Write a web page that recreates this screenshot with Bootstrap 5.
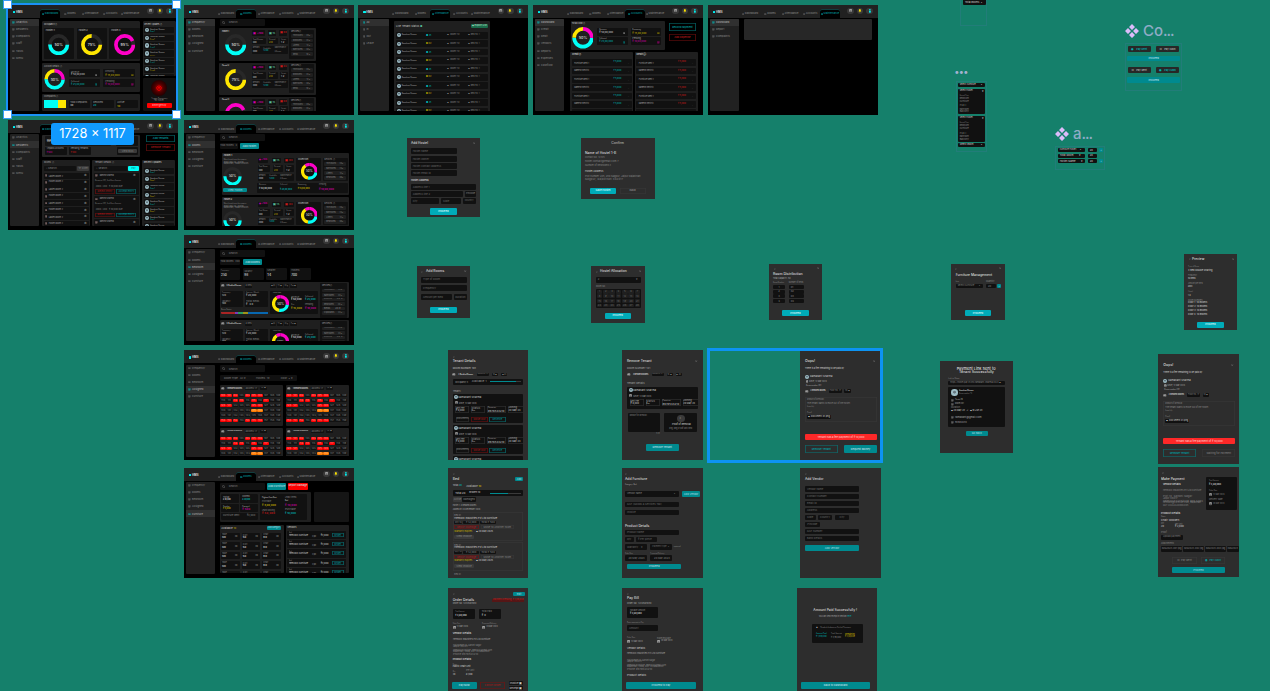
<!DOCTYPE html>
<html lang="en">
<head>
<meta charset="utf-8">
<title>Hostel dashboard – design board</title>
<link href="https://cdn.jsdelivr.net/npm/bootstrap@5.3.0/dist/css/bootstrap.min.css" rel="stylesheet">
<script src="https://cdn.jsdelivr.net/npm/bootstrap@5.3.0/dist/js/bootstrap.bundle.min.js"></script>
<style>
body{margin:0;background:#15806b;font-family:Inter,"Liberation Sans",sans-serif;overflow:hidden}
#board{position:relative;width:1270px;height:691px;overflow:hidden;font-size:2.6px;line-height:1;color:#848484}
.artboard{position:absolute;overflow:hidden;background:#000}
.sheet{position:absolute;overflow:hidden;background:#2d2d2d}
.plain{background:none;border:1px solid rgba(60,120,150,.35)}
.cell{flex:none;display:flex;align-items:center;white-space:nowrap;min-width:0}
.bx{background:#111;border-radius:1px;padding:0 2px;overflow:hidden}
.mid{justify-content:center;padding:0}
.panel{display:block;overflow:hidden;border-radius:1px;background:#111}
.g1{background:#1f1f1f}.g2{background:#272727}.g3{background:#151515}.g4{background:#3a3a3a}
.bare{background:none}
.teal{background:#008a8f;color:#b5dfe2}.aqua{background:#00abb8;color:#dffafc}.cyan{background:#00fff7;color:#077}
.yel{background:#ffe600}.redb{background:#fe2828;color:#ffbdbd}.pure{background:#f00;color:#ff9c9c}.org{background:#ff7a00;color:#ffc08a}
.grn{background:#1b6b4b;color:#bfe0d0}
.s1{background:#a92424}.s2{background:#7a3bbb}.s3{background:#2a9c62}.s4{background:#a09318}.s5{background:#0867b0}
.oc{background:none;box-shadow:inset 0 0 0 .6px #067a7d;color:#00a0a4}
.or{background:none;box-shadow:inset 0 0 0 .6px #7c1010;color:#b01818}
.og{background:none;box-shadow:inset 0 0 0 .5px #3b3b3b;color:#888}
.w{color:#d6d6d6}.lg{color:#a8a8a8}.dk{color:#6a6a6a}.tc{color:#00b8b8}.ty{color:#c9b700}.tr{color:#cc1a1a}.tm{color:#d200a8}.tg{color:#5b9}
.b{font-weight:600}
.h{font-size:4.1px;font-weight:500;color:#dcdcdc}.h2x{font-size:3.3px;color:#c8c8c8}
.ava{border-radius:50%;background:radial-gradient(circle at 50% 45%,#667780 0 20%,#9dbdc6 34% 100%)}
.disc{border-radius:50%;background:#3a3a3a;color:#888}
.glow{border-radius:50%;background:radial-gradient(circle,#8e0000 0 18%,#4d0000 40%,#250000 70%)}
.topbar{height:13px;background:#212121}
.logo{margin:5px 0 0 4.8px;width:27.2px;color:#ddd;font-size:2.8px;font-weight:700;display:flex;align-items:center;gap:.6px;height:5px}
.logo i{width:2.6px;height:2.3px;background:#00f5f5;border-radius:.5px}
.tabs5{display:grid;grid-template-columns:repeat(5,20px);padding-top:5.5px}
.tabs5 div{display:flex;align-items:center;justify-content:center;gap:.7px;font-size:2.6px;color:#8c8c8c;white-space:nowrap}
.tabs5 .on{background:#000;border-radius:2px 2px 0 0;color:#00a8ac;box-shadow:0 -.4px 0 #065a5c}
.tabs5 svg{width:2.3px;height:2.3px}
.tools{margin:3px 0 0 7.5px;display:flex;gap:3px}
.tools span{width:6.4px;height:6.4px;border-radius:50%;background:#383838;display:grid;place-items:center}
.tools svg,.sidebar svg{display:block}
.sidebar{width:29px;height:92.2px;margin:1.5px 0 0 1.5px;background:#212121;border-radius:1px;overflow:hidden;flex:none}
.sidebar div{height:7.08px;display:flex;align-items:center;padding-left:2.8px;gap:1.2px;color:#8a8a8a;font-size:2.6px}
.sidebar .on{background:#303030;color:#bbb}
.stage{width:138px;height:93px;overflow:hidden;flex:none}
.picked{position:absolute;border:2px solid #1a91f7}
.picked.bold{border-width:3px;border-color:#0d93f2}
.grip{position:absolute;width:9px;height:9px;background:#fff;border:1px solid #3a9df5}
.sizetag{position:absolute;left:51px;top:123px;width:83px;height:22px;border-radius:3px;background:#119aff;color:#fff;font-size:12.8px;display:flex;align-items:center;justify-content:center;white-space:nowrap}
.note{position:absolute;display:flex;align-items:center;gap:4px;color:#8facc6;font-size:15px;line-height:16px;white-space:nowrap;font-weight:500}
.note b{font-weight:500;letter-spacing:-1.1px}
.note b.dots{font-weight:800;color:#a3b2d0;font-size:16px}
</style>
</head>
<body>
<main id="board"></main>
<script>
const board = document.getElementById('board');
let K = 3; // design units per screen pixel
const px = v => (v / K).toFixed(2) + 'px';
const wrap = s => s === '' || s[0] === '<' ? s : '<span>' + s + '</span>';

// A vertical flow of rows: [top, height, ...cells], cell = [left, width, class, content]
function stack(x0, y0, rows) {
  let y = y0, out = '';
  for (const [top, h, ...cells] of rows) {
    let x = x0;
    out += `<div class="d-flex" style="margin-top:${px(top - y)};height:${px(h)}">`;
    for (const [cx, w, cls, body = ''] of cells) {
      out += `<div class="cell ${cls}" style="margin-left:${px(cx - x)};width:${px(w)}">${wrap(body)}</div>`;
      x = cx + w;
    }
    out += '</div>';
    y = top + h;
  }
  return out;
}
const L = (y, ...c) => [y - 5, 10, ...c.map(([x, w, s, k = '']) => [x, w, 't ' + k, s])];
const B = (y, h, ...c) => [y, h, ...c.map(([x, w, s = '', k = '']) => [x, w, 'bx ' + k, s])];
const P = (x, y, w, cls, rows) => [x, w, 'panel ' + cls, stack(x, y, rows)];

function donut(segs, label, sw = 17) {
  const arcs = segs.map(([c, from, len]) => `<circle r="41" fill="none" stroke="${c}" stroke-width="${sw}" pathLength="100" stroke-dasharray="${len} ${100 - len}" stroke-dashoffset="${-from}"/>`).join('');
  return `<svg viewBox="-50 -50 100 100" width="100%" height="100%"><g transform="rotate(-90)"><circle r="41" fill="none" stroke="#282828" stroke-width="${sw}"/>${arcs}</g><text y="6" text-anchor="middle" font-size="17" font-weight="600" fill="#c8c8c8">${label}</text></svg>`;
}
const CY = '#00fff7', YE = '#ffe600', MA = '#ff00c8';
const half = donut([[CY, 25, 50]], '50%'), three = donut([[YE, 25, 75]], '75%'), most = donut([[MA, 25, 93]], '95%');
const mix = donut([[CY, 25, 50], [YE, 75, 25], [MA, 0, 25]], '50%');
const mix2 = donut([[MA, 90, 10], [MA, 0, 28], [CY, 28, 25], [YE, 53, 37]], '50%', 19);

const ico = {
  cal: c => `<svg viewBox="0 0 16 16" width="3.2" height="3.2" fill="none" stroke="${c}" stroke-width="2"><rect x="2" y="3" width="12" height="11" rx="1"/><path d="M2 5h12" stroke-width="4"/></svg>`,
  bell: '<svg viewBox="0 0 16 16" width="3.8" height="3.8" fill="#ffe600"><path d="M8 0c4 1 4 5 4 8l2 3H2l2-3c0-3 0-7 4-8zM6 12h4l-2 3z"/></svg>',
  user: '<svg viewBox="0 0 16 16" width="3.8" height="3.8" fill="#00f0f0"><circle cx="8" cy="4" r="3.5"/><path d="M4 8h8l-1 8H5z"/></svg>',
  bed: '<svg viewBox="0 0 16 16" width="3.6" height="3.2" fill="#ccc"><path d="M1 3h14v10h-2v-2H3v2H1zm2 2v2h4V5zm6 0v2h4V5z" fill-rule="evenodd"/></svg>',
  box: c => `<svg viewBox="0 0 16 16" width="2.6" height="2.6" fill="none" stroke="${c}" stroke-width="2.5"><rect x="2" y="2" width="12" height="12" rx="1"/><path d="M5 9h6M8 5v6"/></svg>`,
  find: '<svg viewBox="0 0 16 16" width="3.2" height="3.2" fill="none" stroke="#888" stroke-width="2"><circle cx="7" cy="7" r="5"/><path d="M11 11l4 4"/></svg>',
  x: '<svg viewBox="0 0 16 16" width="2.4" height="2.4" fill="none" stroke="#999" stroke-width="2"><path d="M2 2l12 12M14 2L2 14"/></svg>',
  back: '<svg viewBox="0 0 16 16" width="2.2" height="2.2" fill="none" stroke="#aaa" stroke-width="2.5"><path d="M11 2L4 8l7 6"/></svg>'
};
const put = h => board.insertAdjacentHTML('beforeend', h);
const tabNames = ['Dashboard', 'Rooms', 'Attendance', 'Accounts', 'Maintenance'];

function artboard(x, y, ox, oy, tab, side, on, rows) {
  const tabs = tabNames.map((n, i) => `<div class="${i === tab ? 'on' : ''}">${ico.box(i === tab ? '#0cc' : '#777')}${n}</div>`).join('');
  const items = side.map((n, i) => `<div class="${i === on ? 'on' : ''}">${ico.box(i === on ? '#0cc' : '#777')}${n}</div>`).join('');
  put(`<section class="artboard" style="left:${x}px;top:${y}px;width:170px;height:110px">
    <div class="topbar d-flex"><div class="logo"><i></i>HMS</div><div class="tabs5">${tabs}</div>
    <div class="tools"><span>${ico.cal('#ddd')}</span><span>${ico.bell}</span><span>${ico.user}</span></div></div>
    <div class="d-flex"><div class="sidebar">${items}</div><div class="stage">${stack(ox + 30.5 * K, oy + 13 * K, rows)}</div></div></section>`);
}
function sheet(x, y, w, h, ox, oy, rows, cls = '') {
  put(`<section class="sheet ${cls}" style="left:${x}px;top:${y}px;width:${w}px;height:${h}px">${stack(ox, oy, rows)}</section>`);
}
const range = n => [...Array(n).keys()];
const roomSide = ['Frequency', 'Rooms', 'Bedroom', 'Assigned', 'Furniture'];

/* ---------- Analytics ---------- */
artboard(8, 4.5, 24, 13, 0, ['Analytics', 'Residents', 'Complaints', 'Staff', 'Tasks', 'Menu'], 0, [
  [63, 269,
    [126, 294, 'panel bare', stack(126, 63, [
      [63, 120, P(126, 63, 294, 'g1', [L(72, [132, 42, 'Occupancy ⓘ', 'w']),
        [85, 92, ...[['Hostel 1', half, 131], ['Hostel 2', three, 230], ['Hostel 3', most, 328]].map(([n, d, x]) =>
          P(x, 85, 92, '', [L(94, [x + 6, 28, n, 'lg b']), [101, 64, [x + 14, 64, '', d]]]))]])],
      [189, 87, P(126, 189, 294, 'g1', [L(198, [132, 55, 'Account Details ⓘ', 'lg']),
        [207, 62, [131, 64, '', mix], [207, 200, 'panel bare', stack(207, 207, [
          ...[[207, 'Revenue', '₹ 50,00,000', 'w', '#aaa', 'Remaining', '₹ 15,00,000', 'ty', '#a90'], [237, 'Collected', '₹ 25,00,000', 'tc', '#099', 'Pending', '₹ 10,00,000', 'tm', '#b08']].map(r =>
            [r[0], 25, P(207, r[0], 93, '', [L(r[0] + 8, [213, 25, r[1]]), L(r[0] + 17, [213, 42, r[2], r[3]], [284, 8, ico.box(r[4])])]),
              P(310, r[0], 94, '', [L(r[0] + 8, [316, 28, r[5]]), L(r[0] + 17, [316, 43, r[6], r[7]], [393, 8, ico.box(r[8])])])])])]]])],
      [282, 50, P(126, 282, 294, 'g1', [L(291, [132, 46, 'Complaints ⓘ', 'lg']),
        [300, 25, [132, 42, 'cyan'], [174, 24, 'yel'],
          ...[[207, 64, 'Total Complaints', '30', 'w'], [276, 67, 'Resolved', '20', 'tc'], [348, 65, 'Active', '10', 'ty']].map(([x, w, a, b, c]) =>
            P(x, 300, w, '', [L(308, [x + 4, Math.min(52, a.length * 3.7), a, 'lg']), L(317, [x + 4, 9, b, c + ' b'])]))]])]])],
    [428, 99, 'panel bare', stack(428, 63, [
      [63, 165, P(428, 63, 99, 'g1', [L(72, [433, 55, 'Recent Updates ⓘ', 'w']),
        ...range(7).map(i => [80 + i * 23.5, 20, P(432, 80 + i * 23.5, 91, '', [[83 + i * 23.5, 13, [435, 13, 'ava'],
          [450, 60, 'panel bare', stack(450, 83 + i * 23.5, [L(88 + i * 23.5, [450, 45, 'Ramakant Sharma', 'lg']), L(95 + i * 23.5, [450, 15, 'Room ' + (i + 1), i % 2 ? 'ty' : 'tc'])])]]])])])],
      [235, 97, P(428, 235, 99, '', [[239, 48, [454, 48, 'glow mid', '<svg viewBox="0 0 16 16" width="6" height="6" fill="none" stroke="#f00" stroke-width="2"><path d="M5 3a6 6 0 1 0 6 0M8 1v7M6 5v5M10 5v5"/></svg>']],
        L(295, [454, 50, 'Trigger Emergency']), L(301, [464, 28, 'for hostel']), B(309, 14, [441, 74, 'Emergency', 'pure mid b'])])]])]]
]);

/* ---------- Frequency ---------- */
const freq = (y, name, d) => [y, 97, P(658, y, 290, 'g1', [[y + 4, 88,
  [664, 85, 'panel bare', stack(664, y + 4, [L(y + 9, [666, 22, name, 'w b']), [y + 18, 64, [674, 64, '', d]]])],
  [755, 110, 'panel bare', stack(755, y + 4, [
    B(y + 6, 17, [755, 40, '▣ +100', 'mid tm b'], [804, 24, '▣ 15', 'mid tg b'], [838, 24, '▣ 03', 'mid tr b']),
    [y + 28, 20, ...[[755, 42, 'Total Rooms', '400', 'w'], [804, 30, 'Occupied', '20', 'ty'], [840, 25, 'Vacant', '12', 'w']].map(([x, w, a, b, c]) => P(x, y + 28, w, '', [L(y + 34, [x + 3, w - 10, a]), L(y + 42, [x + 3, 12, b, c])]))],
    [y + 53, 23, P(755, y + 53, 110, '', [L(y + 60, [758, 21, 'Remark'], [790, 23, 'Available'], [824, 35, 'Maintenance']), L(y + 69, [758, 14, '2000', 'w'], [790, 16, '1200', 'tc'], [824, 20, '6 Rooms'])])]])],
  P(868, y + 4, 75, '', [L(y + 11, [873, 33, 'Services ⓘ', 'lg']), ...range(5).map(i => B(y + 17 + i * 13.7, 11, [873, 66, ['Televisions &nbsp; &nbsp; &nbsp; 20 ▾', 'Bedrooms &nbsp; &nbsp; &nbsp; &nbsp;24 ▾', 'Linens &nbsp; &nbsp; &nbsp; &nbsp; &nbsp; &nbsp; 12 ▾', 'Bathrooms &nbsp; &nbsp; &nbsp; 40 ▾', 'Beds &nbsp; &nbsp; &nbsp; &nbsp; &nbsp; &nbsp; &nbsp; 10 ▾'][i], 'g1'])) ])]])];
const searchField = `<span class="d-flex gap-1 align-items-center">${ico.find}<span>Search...</span></span>`;
const search = (x, y) => B(y, 21, [x, 136, searchField, '']);
artboard(184, 4.5, 552, 13, 1, roomSide, 0, [search(659, 57), freq(85, 'Hostel 1', half), freq(188, 'Hostel 2', three), freq(291, 'Hostel 3', most)]);

/* ---------- Attendance, accounts, maintenance ---------- */
K = 2.958;
artboard(358.3, 4.5, 12.5, 13, 2, ['All', 'In', 'Out', 'Leave'], 0, [
  [63, 270, P(118, 63, 285, 'g1', [
    [71, 12, [124, 80, 't h2x', 'Live Tenant Status <span class="tg">●</span>'], [345, 51, 'bx grn mid', '▦ Export List']],
    ...range(10).map(i => { const y = 94 + i * 25; return [y, 20, P(124, y, 272, '', [[y + 4, 12, [127, 12, 'ava'], [141, 45, 't lg', 'Ramakant Sharma'], [213, 16, 't ' + (i % 2 ? 'ty' : 'tc'), i % 2 ? '● Out' : '● In'], [275, 40, 't', '▣ &nbsp;Room 112'], [336, 38, 't', '▣ &nbsp;Bed no. 1']]])]; })])]]);
const ledger = (x, title, col, amt) => P(x, 153, 186, 'g1', [L(163, [x + 5, 30, title, 'w b']),
  ...range(7).map(i => [175 + i * 24.8, 20, P(x + 4, 175 + i * 24.8, 178, '', [L(185 + i * 24.8, [x + 12, 45, i % 2 ? 'Ramesh Electric' : 'Furniture Rent 1', 'lg'], [x + 128, 24, amt, col], [x + 170, 4, '⋮'])])])]);
artboard(533, 4.5, 530, 13, 3, ['Dashboard', 'Credit', 'Debit', 'Vendors', 'Reports', 'Expenses', 'Cashflow'], 0, [
  [63, 86, P(641, 63, 280, 'g1', [L(72, [645, 42, 'Total Flow ⓘ', 'w']), [80, 64, [644, 65, '', mix], [720, 190, 'panel bare', stack(720, 80, [
    ...[[82, 'Revenue', '₹ 50,00,000', 'w', '#aaa', 'Remaining', '₹ 15,00,000', 'ty', '#a90'], [109, 'Collected', '₹ 25,00,000', 'tc', '#099', 'Pending', '₹ 10,00,000', 'tm', '#b08']].map(r => [r[0], 24, P(720, r[0], 92, '', [L(r[0] + 7, [726, 22, r[1], 'lg']), L(r[0] + 16, [726, 42, r[2], r[3]], [796, 8, ico.box(r[4])])]), P(820, r[0], 90, '', [L(r[0] + 7, [824, 26, r[5], 'lg']), L(r[0] + 16, [824, 42, r[6], r[7]], [898, 8, ico.box(r[8])])])])])]]]),
    [931, 82, 'panel bare', stack(931, 63, [B(69, 23, [931, 82, 'Record Payment', 'oc mid b']), B(99, 23, [931, 82, 'Add Expense', 'or mid b'])])]],
  [153, 180, ledger(640, 'Credit ⓘ', 'tc', '₹ 5,000'), ledger(831, 'Debit ⓘ', 'tr', '₹ 5,000')]]);
artboard(708, 4.5, 1047, 13, 4, ['Dashboard', 'Report', 'Complaints'], 0, [[57, 61, [1153, 379, 'panel g2']]]);
K = 3;

/* ---------- Tenants in rooms ---------- */
artboard(8, 119.7, 24, 11, 0, ['Analytics', 'Residents', 'Complaints', 'Staff', 'Tasks', 'Menu'], 1, [
  [57, 66, P(126, 57, 294, 'g2', [[61, 28, P(134, 61, 200, 'g3', [L(71, [140, 40, 'Total Tenants', 'w']), L(79, [140, 12, '120', 'w'])]), P(348, 61, 66, '', [L(72, [353, 40, 'Complaints'])])],
    [92, 26, P(134, 92, 67, '', [L(99, [140, 52, 'Unpaid Accounts', 'lg']), L(108, [140, 17, '₹ 500', 'tm'])]), P(206, 92, 66, '', [L(99, [212, 54, 'Pending Tenants', 'lg']), L(108, [212, 17, '₹ 500', 'tr'])]), P(350, 92, 64, '', [B(98, 14, [354, 57, 'View Bills', 'g4 mid'])])]]),
    [438, 89, 'panel bare', stack(438, 57, [B(58, 20, [438, 88, 'Add Tenants', 'oc mid b']), B(84, 21, [438, 88, 'Remove Tenant', 'or mid b'])])]],
  [131, 199,
    P(126, 131, 145, 'g1', [L(141, [132, 31, 'Rooms ⓘ', 'lg']), B(150, 14, [131, 98, '⌕ &nbsp;Search...'], [232, 36, '▽ Filter', 'g4 mid']),
      ...range(8).map(i => [170 + i * 20.6, 18, P(131, 170 + i * 20.6, 137, '', [L(179 + i * 20.6, [134, 10, ico.box('#b99')], [146, 44, i % 2 ? 'Hostel Room 2' : 'Ladies Room 2', 'lg'], [252, 10, '⚙', 'lg'])])])]),
    P(277, 131, 143, 'g1', [L(141, [285, 60, 'Tenant Details ⓘ', 'lg']), B(150, 14, [282, 100, '⌕ &nbsp;Search...'], [385, 31, 'Pay', 'cyan mid']),
      ...range(3).map(i => { const y = 170 + i * 70; return [y, 66, P(281, y, 136, '', [L(y + 9, [285, 9, ico.box('#b99')], [299, 43, 'Ramesh Sharma', 'lg'], [400, 9, '⚙', 'lg']), L(y + 25, [285, 80, 'Room no 201, 2nd floor Annexe', '']), L(y + 43, [287, 82, '2000 / 200 &nbsp; ₹ 30,000 due']), B(y + 50, 13, [286, 58, 'Reject entry', 'or mid'], [349, 60, 'Accept entry', 'oc mid'])])]; })]),
    P(426, 131, 99, 'g1', [L(141, [431, 55, 'Recent Updates', 'w']), ...range(8).map(i => [155 + i * 23.6, 20, P(431, 155 + i * 23.6, 92, '', [[159 + i * 23.6, 13, [435, 13, 'ava'], [450, 60, 'panel bare', stack(450, 159 + i * 23.6, [L(164 + i * 23.6, [450, 44, 'Ramakant Sharma', 'lg']), L(171 + i * 23.6, [450, 15, 'Room 1', i % 2 ? 'ty' : 'tc'])])]]])])])]]);

/* ---------- Hostels ---------- */
const hostel = (y, n) => [y, 127, P(666, y, 380, 'g1', [[y + 3, 120,
  [669, 95, 'panel bare', stack(669, y + 3, [L(y + 9, [671, 26, n, 'w b']), L(y + 21, [671, 70, 'Men’s hostel near the campus']), L(y + 28, [671, 60, 'Plot no 12, Kota']), L(y + 34, [671, 76, 'Rajasthan, India 324005']), [y + 41, 56, [668, 57, '', half]], B(y + 104, 14, [669, 72, 'View Hostel', 'teal mid'])])],
  [771, 275, 'panel bare', stack(771, y + 3, [[y + 14, 70,
    [771, 113, 'panel bare', stack(771, y + 14, [B(y + 14, 16, [773, 32, '▣ +100', 'mid tm b'], [815, 27, '▣ 15', 'mid tg b'], [852, 30, '▣ 03', 'mid tr b']),
      [y + 36, 21, ...[[773, 37, 'Total Room', '400', 'w'], [819, 30, 'Occupied', '20', 'ty'], [856, 25, 'Vacant', '12', 'w']].map(([x, w, a, b, c]) => P(x, y + 36, w, '', [L(y + 42, [x + 3, w - 10, a]), L(y + 51, [x + 3, 12, b, c])]))],
      [y + 62, 22, P(773, y + 62, 110, '', [L(y + 69, [776, 21, 'Remark'], [808, 23, 'Available'], [841, 35, 'Maintenance']), L(y + 77, [776, 14, '2000', 'w'], [808, 16, '1200', 'tc'], [841, 20, '6 Rooms'])])]])],
    P(888, y + 14, 76, '', [L(y + 22, [894, 32, 'Collection', 'w']), [y + 30, 50, [902, 50, '', mix2]]]),
    P(969, y + 14, 74, '', [L(y + 20, [973, 32, 'Services ⓘ', 'lg']), ...range(4).map(i => B(y + 27 + i * 14, 11, [973, 66, ['Televisions &nbsp; &nbsp; &nbsp; 20 ▾', 'Bathrooms &nbsp; &nbsp; &nbsp; 24 ▾', 'Linens &nbsp; &nbsp; &nbsp; &nbsp; &nbsp; &nbsp; 12 ▾', 'Bedrooms &nbsp; &nbsp; &nbsp; 40 ▾'][i], 'g1']))])],
    [y + 90, 30, P(771, y + 90, 272, '', [L(y + 96, [777, 22, 'Revenue'], [840, 22, 'Collected'], [893, 27, 'Remaining'], [957, 22, 'Pending']), L(y + 108, [777, 40, '₹ 50,00,000', 'w b'], [840, 37, '₹ 25,00,000', 'tc b'], [893, 37, '₹ 15,00,000', 'ty b'], [957, 45, '₹ 10,00,000', 'tm b'])])]])]]])];
artboard(184, 119.7, 552, 11, 1, roomSide, 1, [search(659, 54), B(81, 18, [659, 54, 'Total Hostels &nbsp; 4', 'mid'], [720, 56, 'Add Hostel', 'teal mid b']), hostel(111, 'Hostel 1'), hostel(243, 'Hostel 2')]);

/* ---------- Room list ---------- */
const roomRow = y => [y, 108, P(119, y, 388, 'g1', [[y + 3, 104,
  [121, 297, 'panel bare', stack(121, y + 3, [B(y + 6, 11, [122, 14, ico.bed, 'bare mid'], [138, 48, '6 Bedded Rooms', 'bare mid b w'], [195, 22, '6 Bed', 'mid'], [270, 18, '▣ AC', 'mid'], [291, 17, 'TV ▣', 'mid'], [311, 17, 'Wifi ▣', 'mid'], [331, 20, 'Fan ▣', 'mid']),
    [y + 26, 70, [122, 145, 'panel bare', stack(122, y + 26, [...[[y + 26, 'Frequency', '120', 'Amount / Month', '₹ 20,000'], [y + 52, 'Vacancy', '100', 'Total Beds', '₹ 40']].map(r => [r[0], 24, P(122, r[0], 68, '', [L(r[0] + 7, [126, 26, r[1]]), L(r[0] + 16, [126, 12, r[2], 'w'])]), P(195, r[0], 69, '', [L(r[0] + 7, [198, 40, r[3]]), L(r[0] + 16, [198, 32, r[4], 'w'])])]),
      L(y + 83, [123, 32, 'Room Status']), [y + 89, 6, [123, 42, 's1'], [165, 8, 's2'], [173, 17, 's3'], [190, 14, 's4'], [204, 59, 's5']]])],
      P(270, y + 26, 144, '', [L(y + 33, [279, 25, '• Collections', 'w']), [y + 37, 57, [275, 51, '', mix2], [333, 80, 'panel bare', stack(333, y + 37, [L(y + 46, [333, 25, 'Revenue', ''], [375, 25, 'Collected']), L(y + 54, [333, 33, '₹ 50,000', 'w b'], [375, 33, '₹ 25,000', 'tc b']), L(y + 70, [333, 10, 'Due'], [375, 25, 'Pending']), L(y + 78, [333, 33, '₹ 15,000', 'ty b'], [375, 33, '₹ 10,000', 'tm b'])])]]])]])],
  P(420, y + 6, 82, '', [L(y + 15, [426, 33, 'Services ⓘ', 'lg']), ...range(6).map(i => B(y + 23 + i * 13.6, 10, [426, 69, ['Televisions', 'Bathrooms', 'Linens', 'Bedrooms', 'Beds', 'Cupboards'][i] + ' &nbsp; &nbsp; &nbsp; 24 ▾', 'g1']))])]])];
artboard(184, 234.7, 12, 14, 1, roomSide, 2, [search(119, 60), B(88, 18, [119, 62, 'Total Rooms &nbsp; 300', 'mid'], [189, 57, 'Add Rooms', 'teal mid b']),
  [114, 36, ...[[119, 'Frequency', '250', 'tc'], [189, 'Vacancy', '98', 'ty'], [258, 'Seater', '14', 'w'], [330, 'Hostels', '700', 'w']].map(([x, a, b, c]) => P(x, 114, 62, '', [L(122, [x + 4, 25, a]), L(136, [x + 4, b.length * 6, b, c + ' b h2x'])]))],
  roomRow(156), roomRow(270)]);

/* ---------- Bed map ---------- */
const beds = ['rrrdrrrddd', 'ddrrdrdrdd', 'rrdddrrddd', 'dddddooddd', 'dddddddddd', 'rrrdrrrddd'];
const bedGrid = (x, y, n) => P(x, y, 189, 'g1', [B(y + 5, 11, [x + 3, 14, ico.bed, 'bare mid'], [x + 19, 50, '1 Bedded Rooms', 'bare mid b w'], [x + 75, 40, 'Rooms 17', 'mid'], [x + 121, 20, '10 ▣', 'mid']),
  ...range(n).map(r => B(y + 27 + r * 15, 10, ...range(10).map(c => { const k = beds[r][c]; return [x + 2 + c * 18.4, 17, '' + (100 + r * 10 + c), 'mid ' + (k === 'r' ? 'pure' : k === 'o' ? 'org' : '')]; })))]);
artboard(184, 350, 12, 360, 1, roomSide, 3, [search(119, 406), B(436, 17, [119, 232, 'Room Type &nbsp; All ▾ &nbsp; &nbsp; &nbsp; &nbsp; &nbsp; &nbsp; &nbsp;Hostels &nbsp;1 ▾ &nbsp; &nbsp; &nbsp; &nbsp; &nbsp; &nbsp; &nbsp;Floor &nbsp;• ▾', 'mid']),
  [465, 122, bedGrid(119, 465, 6), bedGrid(317, 465, 6)], [594, 90, bedGrid(119, 594, 4), bedGrid(317, 594, 4)]]);

/* ---------- Furniture ---------- */
artboard(184, 467.5, 12, 17, 1, roomSide, 4, [
  B(63, 21, [119, 136, searchField, ''], [262, 56, 'Add Furniture', 'teal mid b'], [324, 60, 'Report Damage', 'pure mid b w']),
  [90, 90, P(119, 90, 274, 'g1', [[98, 76, [122, 113, 'panel bare', stack(122, 98, [
      ...[[98, 'Total', '₹ 40,000', 'w', 'Owned', '₹ 20,000', 'tc'], [126, 'Surplus', '₹ 5,000', 'ty', 'Damaged', '₹ 500', 'tm']].map(r => [r[0], 25, P(123, r[0], 54, '', [L(r[0] + 8, [129, 20, r[1], 'lg']), L(r[0] + 17, [129, 24, r[2], r[3] + ' b'])]), P(180, r[0], 54, '', [L(r[0] + 8, [187, 22, r[4], 'lg']), L(r[0] + 17, [187, 24, r[5], r[6] + ' b'])])]),
      B(155, 19, [123, 111, 'Furniture Rent &nbsp; &nbsp; &nbsp; &nbsp; &nbsp; ₹2,000', ''])])],
    P(240, 98, 142, '', [L(109, [246, 45, 'Highest Cost Rent', 'w'], [315, 35, 'Least Items']), L(117, [246, 28, 'Purchase'], [315, 10, 'Bed', 'w']), L(129, [246, 42, '₹ 4,00,000', 'ty b'], [315, 36, '₹ 10,000', 'tm b']), L(146, [246, 39, 'Least Moving', ''], [315, 33, 'Purchase']), L(156, [246, 40, '₹ 50,000', 'tr b'], [315, 33, '₹ 10,000', 'tc b'])])]]), [402, 104, 'panel g3']],
  [189, 144, P(119, 189, 193, 'g1', [[192, 12, [124, 45, 't w', 'Available <span class="ty">10</span>'], [261, 42, 'bx teal mid', 'Add Category']],
      ...range(5).map(r => [213 + r * 28.3, 23, ...range(3).map(c => P(123 + c * 62, 213 + r * 28.3, 56, '', [L(219 + r * 28.3, [126 + c * 62, 15, ['Table', 'Cot', 'Chair'][c]]), L(227 + r * 28.3, [126 + c * 62, 12, ['500', '50', '80'][c], 'w b'], [164 + c * 62, 8, '20', 'lg'])]))])]),
    P(317, 189, 189, 'g1', [L(198, [322, 28, 'Vendors', 'w']), ...range(5).map(r => [207 + r * 28, 25, P(320, 207 + r * 28, 178, '', [
      [207 + r * 28, 25, [326, 126, 'panel bare', stack(326, 207 + r * 28, [L(213 + r * 28, [326, 10, 'Bed']), L(222 + r * 28, [326, 60, 'Hemlock Furniture', 'w'], [396, 13, '2 pc', 'lg'], [422, 24, '₹3,000', 'w'])])],
        [456, 36, 'panel bare', stack(456, 207 + r * 28, [B(213 + r * 28, 12, [456, 35, 'Order', 'oc mid'])])]]])])])]]);

/* ---------- Dialog sheets ---------- */
const F = B;
sheet(406.7, 138, 73.3, 79, 20, 39, [L(55, [33, 52, 'Add Hostel', 'h'], [219, 7, ico.x]), F(69, 18, [32, 138, 'Hostel name', 'dk']), F(93, 18, [32, 138, 'Hostel owner', 'dk']), F(114, 18, [32, 138, 'Hostel contact address', 'dk']), F(135, 18, [32, 138, 'Hostel email id', 'dk']), L(169, [33, 54, 'Hostel Address', 'w b']), F(178, 18, [32, 195, 'Address line 1', 'dk']), F(199, 18, [32, 158, 'Address line 2', 'dk'], [196, 31, 'Pincode', 'mid']), F(220, 18, [32, 85, 'City', 'dk'], [123, 60, 'State', 'dk'], [188, 39, 'Country', 'dk']), F(250, 19, [90, 80, 'Proceed', 'aqua mid b'])]);
sheet(581, 138, 73.7, 60.7, 543, 39, [L(55, [634, 38, 'Confirm', 'h2x w']), L(85, [555, 96, 'Name of Hostel 1-B', 'h']), L(99, [555, 60, 'Contact No. 12345']), L(112, [555, 103, 'hostel.contact@email.com 7']), L(125, [555, 80, 'Number of Bedrooms 3']), L(141, [555, 56, 'Hostel Address', 'w']), L(156, [555, 170, 'Plot number 205, 2nd Nagpur, Jaipur Rajasthan']), L(164, [555, 115, 'Nagpur, Rajasthan 302017']), F(188, 19, [570, 78, 'Save Hostel', 'aqua mid b'], [659, 78, 'Back', 'og mid b'])]);
sheet(416.7, 266.3, 53.3, 51.4, 50, 424, [L(440, [64, 6, ico.back], [78, 56, 'Add Rooms', 'h'], [193, 7, ico.x]), F(455, 18, [63, 138, 'Type of Room', 'dk']), F(481, 18, [63, 138, 'Frequency', 'dk']), F(507, 18, [63, 94, 'Amount per Bed', 'dk'], [161, 40, 'Duration', 'dk mid']), F(545, 19, [90, 80, 'Proceed', 'aqua mid b'])]);
sheet(591.3, 266.3, 53.4, 56.4, 574, 424, [L(440, [588, 6, ico.back], [600, 82, 'Hostel Allocation', 'h'], [717, 7, ico.x]), F(455, 18, [587, 137, '2 &nbsp; &nbsp; &nbsp; &nbsp; &nbsp; &nbsp; &nbsp; &nbsp; &nbsp; &nbsp; &nbsp; &nbsp; &nbsp; &nbsp; &nbsp; &nbsp; &nbsp; &nbsp; &nbsp; &nbsp; &nbsp; &nbsp; &nbsp; &nbsp; &nbsp; ▾']), L(485, [588, 30, 'Room No.']), [492, 57, P(587, 492, 136, '', range(4).map(r => B(495 + r * 13.7, 11, ...range(7).map(c => [590 + c * 19, 17, '' + (r * 7 + c + 1), 'mid g1 dk']))))], F(563, 18, [614, 78, 'Proceed', 'aqua mid b'])]);
sheet(769, 264, 53.3, 55.7, 27, 72, [L(86, [42, 6, ico.back], [171, 7, ico.x]), L(103, [39, 91, 'Room Distribution', 'h']), L(115, [39, 54, 'Total Capacity: 50', 'lg']), L(128, [39, 34, 'Room Number'], [86, 45, 'Number of Beds']), ...range(4).map(i => F(135 + i * 14.2, 12, [39, 36, '' + (i + 1), 'mid'], [86, 45, '0' + (i + 1)])), F(210, 19, [67, 79, 'Proceed', 'aqua mid b'])]);
sheet(951.3, 264, 53.4, 56, 574, 72, [L(86, [586, 6, ico.back], [717, 7, ico.x]), L(107, [587, 112, 'Furniture Management', 'h']), L(126, [587, 10, 'Item'], [678, 26, 'Quantity']), F(132, 13, [587, 82, 'Select Furniture &nbsp; &nbsp; &nbsp; ▾'], [678, 30, '20'], [711, 13, '+', 'teal mid']), F(210, 18, [615, 78, 'Proceed', 'aqua mid b'])]);
sheet(1184, 254, 53, 75.7, 1272, 42, [L(58, [1286, 6, ico.back], [1296, 38, 'Preview', 'h'], [1415, 7, ico.x]), L(82, [1284, 34, 'Type of Room']), L(93, [1284, 75, '3 Bed Double Sharing', 'w']), L(107, [1284, 28, 'Frequency']), L(118, [1284, 23, '50 Beds', 'w']), L(131, [1284, 45, 'Amount per Bed']), L(142, [1284, 13, '6000', 'w']), L(157, [1284, 15, 'Hostel']), L(167, [1284, 8, '1-B', 'w']), L(181, [1284, 45, 'Room Numbers']), ...range(4).map(i => L(191 + i * 12, [1284, 59, `Floor ${i + 1}: 10 Rooms`, 'w'])), F(245, 19, [1312, 79, 'Proceed', 'aqua mid b'])]);

// Warning dialog, shared by the two "Oops!" boards
const oops = (x, y, b2) => [L(y + 35, [x + 15, 31, 'Oops!', 'h'], [x + 219, 7, ico.x]), L(y + 56, [x + 15, 120, 'There is a fee remaining to be paid by', 'w']),
  [y + 74, 12, [x + 15, 12, 'ava'], [x + 30, 69, 't w h2x', 'Ramakant Sharma']], L(y + 96, [x + 17, 8, ico.cal('#eee')], [x + 27, 54, 'Since, 12 Mar 2023', 'lg']), L(y + 108, [x + 18, 47, 'Room number 201', 'lg']),
  F(y + 118, 11, [x + 14, 13, ico.bed, 'bare mid'], [x + 29, 50, '3 Bedded Rooms', 'bare mid b w'], [x + 87, 38, 'Floor no. 17', 'mid'], [x + 133, 19, '10 ▣', 'mid']),
  [y + 142, 73, P(x + 15, y + 142, 216, 'og bare', [L(y + 151, [x + 21, 52, 'Reason of Removal']), L(y + 163, [x + 21, 132, 'The tenant wants to move out of the hostel']), L(y + 170, [x + 21, 22, 'from July']), L(y + 189, [x + 21, 14, 'Proof']), F(y + 196, 11, [x + 21, 72, '▣ Document 01.png', 'mid w'])])],
  F(y + 252, 18, [x + 15, 216, 'Tenant has a fee payment of ₹ 10,000', 'redb mid b']), F(y + 286, 22, [x + 15, 98, 'Remove Tenant', 'oc mid b'], [x + 132, 99, ...b2])];
sheet(800, 350, 80.5, 110.3, 300, 15, oops(300, 15, ['Request Money', 'teal mid b']));
sheet(1158.3, 354, 80.4, 109.7, 25, 27, oops(25, 27, ['Waiting for Payment', 'og mid']));
sheet(940, 361, 73.3, 92.3, 540, 363, [L(386, [590, 119, 'Payment Link Sent to', 'h']), L(399, [597, 107, 'Tenant Successfully', 'h']), L(416, [565, 34, 'Link to Share']), F(423, 11, [565, 169, 'https://hostel.pay.in/link/ramakant-sharma/2023 ▣']),
  [442, 118, P(565, 442, 169, '', [[447, 20, [573, 20, 'ava'], [597, 60, 'panel bare', stack(597, 447, [L(454, [597, 45, 'Ramakant Sharma', 'w b']), L(463, [597, 40, 'Room number 24'])])]], L(481, [573, 8, ico.box('#999')], [585, 24, 'Hostel 1B', 'lg']), L(493, [573, 8, ico.box('#999')], [585, 27, 'Room 201', 'lg']), L(506, [573, 28, 'Duration']), L(515, [573, 100, '▣ 20 May 23 &nbsp;→ &nbsp;▣ 10 Jun 23', 'w']), L(532, [573, 8, ico.box('#999')], [585, 80, 'ramakant@gmail.com', 'lg']), L(547, [573, 8, ico.box('#999')], [585, 36, '9876543210', 'lg'])])], F(572, 15, [618, 65, 'Go Back', 'teal mid'])]);
sheet(1158.3, 467, 80.4, 110, 25, 366, [L(385, [36, 7, ico.back]), [396, 99, [33, 135, 'panel bare', stack(33, 396, [L(403, [33, 73, 'Make Payment', 'h']), L(421, [39, 54, 'Vendor Details', 'w b']), L(438, [39, 118, 'Hemlock Industries Pvt Ltd Furniture']), L(454, [39, 88, 'Plot 10, Gandhi Nagar']), L(461, [39, 45, 'Jaipur 302017']), L(469, [39, 120, 'Hemlock Furniture and Sons']), L(475, [39, 117, 'hemlock@furniture.com, Rajasthan']), L(482, [39, 78, 'GST 22AAAAA0000A1Z5'])])],
  P(168, 396, 93, '', [L(408, [177, 30, 'Total Amount']), L(420, [177, 37, '₹ 3,98,080', 'w b']), L(437, [177, 25, 'Order Date']), L(449, [177, 9, ico.cal('#eee')], [189, 35, '12 Mar 2023']), L(465, [177, 42, 'Delivery Date']), L(477, [177, 9, ico.cal('#eee')], [189, 35, '20 Mar 2023'])])],
  L(504, [33, 58, 'Product Details', 'w b']), L(517, [33, 14, 'Name']), L(525, [33, 55, 'Chair Wooden', 'w']), L(538, [33, 10, 'Qty'], [75, 23, 'Per unit']), L(547, [33, 9, '20', 'w'], [75, 27, '₹ 2,000', 'w']), L(564, [33, 18, 'Proof']), F(570, 16, [33, 66, 'Upload payment']), L(597, [33, 40, 'Attachments']), F(604, 17, [33, 64, 'IMG2023-001.jpg', 'mid'], [100, 62, 'IMG2023-002.jpg', 'mid'], [165, 63, 'IMG2023-003.jpg', 'mid'], [231, 35, 'IMG2023', 'mid']), F(637, 20, [66, 75, '○ &nbsp;Pay Rent', 'og mid'], [153, 72, '◉ &nbsp;Pay Cash', 'oc og mid tc']), F(667, 17, [66, 159, 'Proceed', 'teal mid'])]);

/* ---------- Tenant details / removal ---------- */
const person = (x, y) => [[y + 4, 12, [x + 4, 12, 'ava'], [x + 17, 71, 't w h2x', 'Ramakant Sharma']], L(y + 26, [x + 6, 9, ico.cal('#eee')], [x + 18, 55, 'Since, 12 Mar 2023', 'lg']),
  [y + 36, 22, ...[['Rent Fee', '₹ 8,000'], ['Status', 'Due'], ['Parent no.', '9876543210'], ['Joining', '20 May 23']].map(([a, b], i) => P(x + 8 + [0, 47, 96, 158][i], y + 36, [42, 42, 57, 50][i], 'og', [L(y + 43, [x + 10 + [0, 47, 96, 158][i], 26, a, 'lg']), L(y + 51, [x + 10 + [0, 47, 96, 158][i], [26, 10, 50, 36][i], b, 'w'])]))]];
sheet(448, 350, 80, 110, 24, 15, [L(35, [39, 6, ico.back]), L(50, [38, 70, 'Tenant Details', 'h']), L(71, [38, 70, 'Room Number 101', 'lg b']), F(83, 11, [36, 13, ico.bed, 'bare mid'], [53, 48, '3 Bedded Rooms', 'bare mid b w'], [111, 36, 'Rooms 17', 'mid'], [156, 18, '10 ▣', 'mid'], [183, 18, '▣ AC', 'mid']),
  [101, 18, P(38, 101, 211, '', [[108, 4, [46, 39, 't lg', 'Occupancy 3'], [95, 45, 't lg', 'Available 1'], [149, 79, 'teal'], [228, 14, 'g4']]])], L(138, [39, 23, 'Tenants', 'lg']),
  ...[147, 240, 333].map(y => [y, 88, P(38, y, 211, '', [...person(38, y), B(y + 70, 13, [48, 40, 'Documents', 'og mid'], [94, 49, 'Move Out', 'or mid'], [148, 49, 'Receive', 'oc mid'])])])]);
sheet(622.3, 350, 80.4, 110, 547, 15, [L(49, [561, 76, 'Remove Tenant', 'h'], [766, 7, ico.x]), L(71, [561, 70, 'Room Number 101', 'lg']), F(83, 11, [561, 13, ico.bed, 'bare mid'], [577, 50, '3 Bedded Rooms', 'bare mid b w'], [635, 36, 'Rooms 17', 'mid'], [680, 18, '10 ▣', 'mid'], [707, 18, '▣ AC', 'mid']), L(116, [561, 53, 'Tenant Details', 'lg']), [126, 67, P(562, 126, 211, '', person(562, 126))],
  [204, 57, P(563, 204, 97, '', [L(212, [569, 53, 'Reason for Removal'])]), P(673, 204, 97, '', [[209, 23, [711, 23, 'disc mid', '↥']], L(241, [696, 58, 'Proof of Removal', 'w']), L(251, [688, 70, 'png, jpeg or pdf upto 5mb'])])], L(267, [649, 11, '0/50']), F(297, 20, [618, 98, 'Remove Tenant', 'teal mid b'])]);

/* ---------- Bed + furniture sheets ---------- */
sheet(448, 467.5, 80, 110, 24, 367, [L(387, [39, 6, ico.back]), [396, 13, [38, 20, 't h', 'Bed'], [225, 24, 'bx teal mid', 'Add']], L(423, [38, 28, 'Total <span class="tc">20</span>', 'lg b'], [79, 45, 'Available <span class="ty">10</span>', 'lg b']), [435, 18, P(38, 435, 211, '', [[443, 4, [46, 30, 't w', 'Total 20'], [88, 33, 't w', 'Broken 10'], [149, 55, 'teal'], [204, 39, 'g4']]])], F(457, 13, [39, 27, 'Active', 'g4 mid'], [66, 42, 'Damaged', 'mid']), L(482, [38, 72, 'Hostel 1: 3 Bedded Rooms', 'lg']), L(492, [38, 85, 'Added on 20 December 2023', 'lg']),
  ...[502, 591].map(y => [y, 87, P(38, y, 211, 'og', [L(y + 9, [43, 20, 'Bed 01']), L(y + 19, [43, 132, 'Hemlock Industries Pvt Ltd Furniture', 'w']), B(y + 26, 10, [43, 24, 'Qty 10', 'mid'], [70, 47, '₹ 12,000', 'mid'], [120, 48, 'Total ₹ 500', 'mid']), [y + 39, 12, [43, 73, 'bx or mid', 'Report Damage'], [123, 98, 'bx og mid', 'Move to Another room']], L(y + 58, [43, 55, 'Warranty Expires', 'ty'], [108, 54, '▣ 20 May 2025', 'w']), B(y + 67, 12, [43, 58, 'View Invoice', 'g4 mid'])])]), L(688, [43, 20, 'Bed 01'])]);
sheet(622.3, 467.5, 80.4, 110, 547, 367, [L(387, [556, 6, ico.back]), L(403, [555, 68, 'Add Furniture', 'h']), L(420, [555, 36, 'Category: Bed', 'lg']), F(438, 17, [555, 163, 'Vendor name &nbsp; &nbsp; &nbsp; &nbsp; &nbsp; &nbsp; &nbsp; &nbsp; &nbsp; &nbsp; &nbsp; &nbsp; &nbsp; &nbsp; &nbsp; &nbsp; &nbsp; &nbsp; &nbsp; &nbsp; &nbsp; &nbsp; &nbsp; &nbsp; ▾'], [726, 55, 'Add Vendor', 'teal mid']), F(470, 16, [555, 163, 'GST (Goods & Services Tax)', 'dk']), F(494, 16, [555, 163, 'Invoice', 'dk']), L(545, [555, 75, 'Product Details', 'h']), F(555, 16, [555, 163, 'Product name', 'dk']), F(575, 16, [555, 27, 'Qty', 'dk'], [588, 63, '₹ Per piece', 'dk']), F(597, 17, [555, 65, 'Warranty &nbsp; &nbsp;▾', 'dk'], [631, 65, 'Payment type &nbsp;▾', 'dk'], [700, 24, 'optional', 'bare mid']), L(625, [555, 24, 'Order Date'], [631, 44, 'Expected Delivery']), F(631, 17, [555, 65, ico.cal('#eee') + '&nbsp; 20 May 2023'], [631, 65, ico.cal('#eee') + '&nbsp; 20 Mar 2023']), F(657, 15, [562, 162, 'Proceed', 'teal mid b'])]);
sheet(800, 467.5, 80.5, 110, 300, 367, [L(387, [316, 6, ico.back]), L(403, [315, 57, 'Add Vendor', 'h']), ...['Vendor name', 'Contact number', 'Email id', 'Address'].map((s, i) => F(424 + i * 21.3, 16, [315, 162, s, 'dk'])), F(509, 16, [315, 33, 'State', 'dk'], [354, 43, 'Country', 'dk'], [404, 44, 'City', 'dk mid']), F(530, 16, [315, 44, 'Pincode', 'dk mid']), F(551, 16, [315, 162, 'GST number', 'dk']), F(572, 16, [315, 162, 'Bank Details', 'dk']), F(601, 16, [315, 162, 'Add Vendor', 'teal mid'])]);

/* ---------- Order / bill / success ---------- */
const vendor = (x, y, w) => [L(y, [x, w, 'Hemlock Industries Pvt Ltd Furniture', 'lg']), L(y + 16, [x, 86, 'Plot number 10, Gandhi Nagar']), L(y + 23, [x, 46, 'Jaipur 302017']), L(y + 31, [x, 120, 'Hemlock Furniture, hemlock@gmail.com']), L(y + 38, [x, 112, 'Rajasthan, India, GST 22AAA0000']), L(y + 44, [x, 76, 'Phone 9876543210'])];
sheet(448, 587.5, 80, 104, 24, 38, [[52, 13, [39, 6, '', ico.back], [219, 36, 'bx teal mid', 'Edit']], [71, 12, [38, 66, 't h', 'Order Details'], [157, 98, 't tr', '<span style="background:#551616">&nbsp;Payment Pending: ₹ 1,98,040&nbsp;</span>']], L(89, [38, 73, 'Order No. 1234567890', 'lg']), [102, 32, P(38, 102, 67, '', [L(111, [46, 28, 'Total Amount']), L(123, [46, 35, '₹ 3,98,080', 'w b'])]), P(117, 102, 66, '', [L(111, [125, 31, 'Total Paid']), L(123, [125, 13, '₹ 0', 'w'])])], L(146, [38, 23, 'Order Date'], [126, 45, 'Expected Delivery']), L(157, [38, 10, ico.cal('#eee')], [50, 35, '12 Mar 2023', 'lg'], [126, 10, ico.cal('#eee')], [139, 35, '20 Mar 2023', 'lg']), L(177, [38, 56, 'Vendor Details', 'w b']), ...vendor(39, 195, 115), L(257, [38, 57, 'Product Details', 'w b']), L(271, [38, 13, 'Name']), L(278, [38, 55, 'Plastic Chair Unit', 'w']), L(290, [38, 8, 'Qty'], [78, 25, 'Per unit']), L(300, [38, 8, '20', 'w'], [78, 20, '₹ 2,000', 'w']),
  [319, 29, [35, 76, 'panel bare', stack(35, 319, [F(321, 22, [35, 76, 'Pay Now', 'teal mid b'])])], [120, 76, 'panel bare', stack(120, 319, [F(322, 22, [120, 76, 'Cancel Order', 'or mid'])])], [207, 42, 'panel bare', stack(207, 319, [F(319, 11, [207, 42, 'Invoice ▣', 'mid w']), F(335, 11, [207, 42, 'Receipt ▣', 'mid w'])])]]]);
sheet(622.3, 587.5, 80.4, 104, 547, 38, [L(58, [562, 6, ico.back]), L(73, [561, 37, 'Pay Bill', 'h']), L(87, [561, 75, 'Order No. 1234567890', 'lg']), [96, 33, P(561, 96, 93, '', [L(105, [570, 47, 'Payable Amount']), L(117, [570, 36, '₹ 3,98,080', 'w b'])])], L(143, [561, 52, 'Enter amount to Pay']), F(151, 19, [561, 93, 'Amount', 'dk']), L(189, [561, 25, 'Order Date'], [651, 42, 'Expected Date']), L(200, [561, 10, ico.cal('#eee')], [573, 36, '12 Mar 2023', 'lg'], [651, 10, ico.cal('#eee')], [663, 35, '20 Mar 2023', 'lg']), L(222, [561, 55, 'Vendor Details', 'w']), ...vendor(561, 239, 117), L(301, [561, 58, 'Product Details', 'w']), F(321, 22, [558, 210, 'Proceed to Pay', 'teal mid b'])]);
sheet(797, 587.5, 80.3, 104, 1071, 38, [L(109, [1120, 134, 'Amount Paid Successfully !', 'h']), L(125, [1136, 100, 'You can view receipt in section <span class="tc">Here</span>', 'lg']), [147, 58, P(1115, 147, 153, '', [L(160, [1128, 8, '♟', 'w'], [1141, 93, 'Hemlock Industries Pvt Ltd Furniture']), L(177, [1128, 33, 'Amount Paid', 'tc'], [1173, 33, 'Total Amount'], [1215, 30, 'Remaining', 'ty']), L(186, [1128, 33, '₹ 1,98,040', 'tc'], [1173, 31, '₹ 3,98,080'], [1215, 30, '₹ 2,00,040', 'ty'])])], F(321, 22, [1083, 208, 'Back to Dashboard', 'teal mid b'])]);

/* ---------- Component sets ---------- */
sheet(960.3, -10, 26.5, 35.5, 61, -30, [B(-12, 23, [66, 68, 'Total Rooms &nbsp; ▾', 'w align-items-end pb-0'])], 'plain');
const menu = (y, h) => [y, h, P(51, y, 82, '', [L(y + 7, [57, 40, 'Select Hostel', 'w'], [125, 6, '▾', 'w']), ...range(6).map(i => L(y + 20 + i * 10.3, [57, 28, ['Ground Floor', 'Bedroom', 'Furniture', 'Hall', 'Bathroom', 'Balcony'][i]]))])];
sheet(956, 81, 30.7, 70.5, 49, 244, [B(248, 10, [51, 82, 'Select Furniture &nbsp; &nbsp; &nbsp; &nbsp;▾', 'w']), menu(264, 77), menu(346, 77), B(428, 10, [51, 82, 'Select Room &nbsp; &nbsp; &nbsp; &nbsp; &nbsp; ▾', 'w'])], 'plain');
sheet(1054.7, 146, 50, 24, 345, 441, range(3).map(i => B(444 + i * 17, 12, [351, 81, ['Furniture Hostel', 'Total Room', 'Hostel Name'][i] + ' &nbsp; &nbsp; &nbsp; ▾', 'w'], [441, 29, '20', 'w'], [475, 12, i === 1 ? '' : '+', i === 1 ? 'bare' : 'teal mid'])), 'plain');
sheet(1125.3, 43.3, 56.4, 47.4, 559, 133, [B(138, 18, [563, 70, '◉ &nbsp; Pay Rent', 'g2 mid tc b'], [648, 70, '○ &nbsp; Pay Cash', 'g2 mid w']), B(167, 17, [562, 158, 'Proceed', 'teal mid b']), B(202, 18, [563, 70, '○ &nbsp; Pay Rent', 'g2 mid w'], [648, 70, '◉ &nbsp; Pay Cash', 'g2 mid tc b']), B(232, 16, [562, 158, 'Proceed', 'teal mid b'])], 'plain');
const diamonds = '<svg width="14" height="14" viewBox="0 0 14 14" fill="#dcbcfb"><path d="M7 0l3 3-3 3-3-3zM3 4l3 3-3 3-3-3zM11 4l3 3-3 3-3-3zM7 8l3 3-3 3-3-3z"/></svg>';
put(`<div class="note" style="left:1125px;top:23px">${diamonds}<span>Co<b>...</b></span></div>
<div class="note" style="left:1055px;top:126px">${diamonds}<span>a<b>...</b></span></div>
<div class="note" style="left:954px;top:60px"><b class="dots">...</b></div>`);

/* ---------- Selection ---------- */
put(`<div class="picked" style="left:6px;top:3px;width:172px;height:113px"></div><div class="picked bold" style="left:707px;top:348px;width:176px;height:115px"></div>
<div class="sizetag">1728 × 1117</div>`);
[[2.6, 0], [172.4, 0], [2.6, 110], [172.4, 110]].forEach(([x, y]) => put(`<div class="grip" style="left:${x}px;top:${y}px"></div>`));

// Shrink labels that are wider than their cell, track out those that are narrower
document.querySelectorAll('.t > span, .bx > span:not(.d-flex)').forEach(s => {
  const cell = s.parentElement, box = cell.classList.contains('bx');
  const pad = box ? (cell.classList.contains('mid') ? 1 : 4) : 0;
  const room = cell.getBoundingClientRect().width - pad;
  const size = parseFloat(getComputedStyle(s).fontSize);
  const wide = s.getBoundingClientRect().width;
  if (wide > room) { s.style.fontSize = (size * room / wide * .98).toFixed(3) + 'px'; return; }
  const n = s.textContent.length;
  if (!box && n > 1) s.style.letterSpacing = Math.min(.6, (room - wide) / n).toFixed(3) + 'px';
});
</script>
</body>
</html>
